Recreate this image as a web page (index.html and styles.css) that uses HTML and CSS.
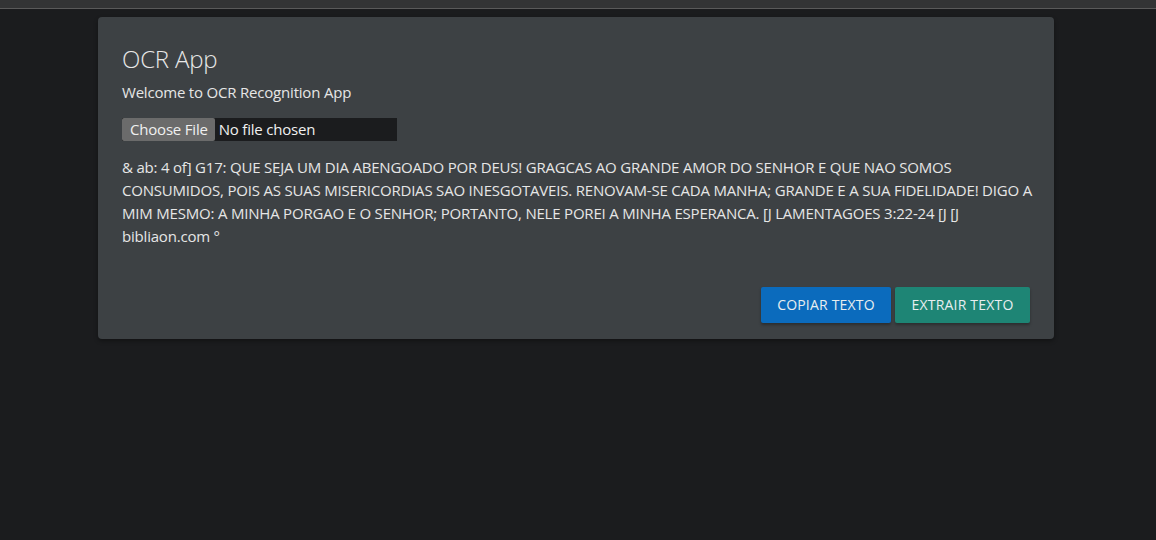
FILE: index.html
```html
<!DOCTYPE html>
<html>
<head>
<meta charset="utf-8">
<link rel="stylesheet" href="styles.css">
</head>
<body>
<div class="topbar"></div>
<main class="page">
  <section class="card">
    <h1 class="title">OCR App</h1>
    <p class="welcome">Welcome to OCR Recognition App</p>
    <div class="file">
      <span class="file-btn">Choose File</span>
      <span class="file-name">No file chosen</span>
    </div>
    <p class="result">&amp; ab: 4 of] G17: QUE SEJA UM DIA ABENGOADO POR DEUS! GRAGCAS AO GRANDE AMOR DO SENHOR E QUE NAO SOMOS CONSUMIDOS, POIS AS SUAS MISERICORDIAS SAO INESGOTAVEIS. RENOVAM-SE CADA MANHA; GRANDE E A SUA FIDELIDADE! DIGO A MIM MESMO: A MINHA PORGAO E O SENHOR; PORTANTO, NELE POREI A MINHA ESPERANCA. [J LAMENTAGOES 3:22-24 [J [J bibliaon.com °</p>
    <div class="actions">
      <button class="btn btn-blue">COPIAR TEXTO</button>
      <button class="btn btn-teal">EXTRAIR TEXTO</button>
    </div>
  </section>
</main>
</body>
</html>
```
FILE: styles.css
```css
* { box-sizing: border-box; }
html, body { margin: 0; padding: 0; }
body {
  background: #1b1c1e;
  font-family: "Open Sans", "Noto Sans", sans-serif;
  color: #e6e6e6;
  height: 540px;
  overflow: hidden;
}
.topbar {
  height: 9px;
  background: #333435;
  border-bottom: 1px solid #5a5a5a;
}
.page {
  padding: 8px 102px 0 98px;
}
.card {
  background: #3d4144;
  border-radius: 4px;
  box-shadow: 0 2px 4px rgba(0,0,0,0.35);
  padding: 26px 24px 16px 24px;
  height: 322px;
  display: flex;
  flex-direction: column;
}
.title {
  margin: 0;
  font-size: 24px;
  font-weight: 300;
  line-height: 31px;
  color: #e8e8e8;
  letter-spacing: -0.2px;
}
.welcome {
  margin: 8px 0 0 0;
  font-size: 15px;
  line-height: 20px;
  letter-spacing: -0.2px;
}
.file {
  margin-top: 16px;
  display: flex;
  width: 275px;
  height: 23px;
  font-size: 15px;
  line-height: 23px;
  background: #1b1c1e;
  letter-spacing: -0.2px;
}
.file-btn {
  background: #6b6b6b;
  color: #f0f0f0;
  padding: 0 7px 0 8px;
  border-radius: 2px;
}
.file-name {
  padding-left: 4px;
  color: #f0f0f0;
}
.result {
  margin: 15px -8px 0 0;
  font-size: 15px;
  line-height: 23px;
  color: #e6e6e6;
  letter-spacing: -0.2px;
}
.actions {
  margin-top: auto;
  display: flex;
  justify-content: flex-end;
  gap: 4px;
}
.btn {
  border: none;
  height: 36px;
  padding: 0 0 1px 0;
  font-family: inherit;
  font-size: 14px;
  letter-spacing: 0.2px;
  color: #e8eef0;
  border-radius: 2px;
  box-shadow: 0 2px 3px rgba(0,0,0,0.3);
}
.btn-blue { background: #0b6bbd; width: 130px; }
.btn-teal { background: #1e8575; width: 135px; }
```
